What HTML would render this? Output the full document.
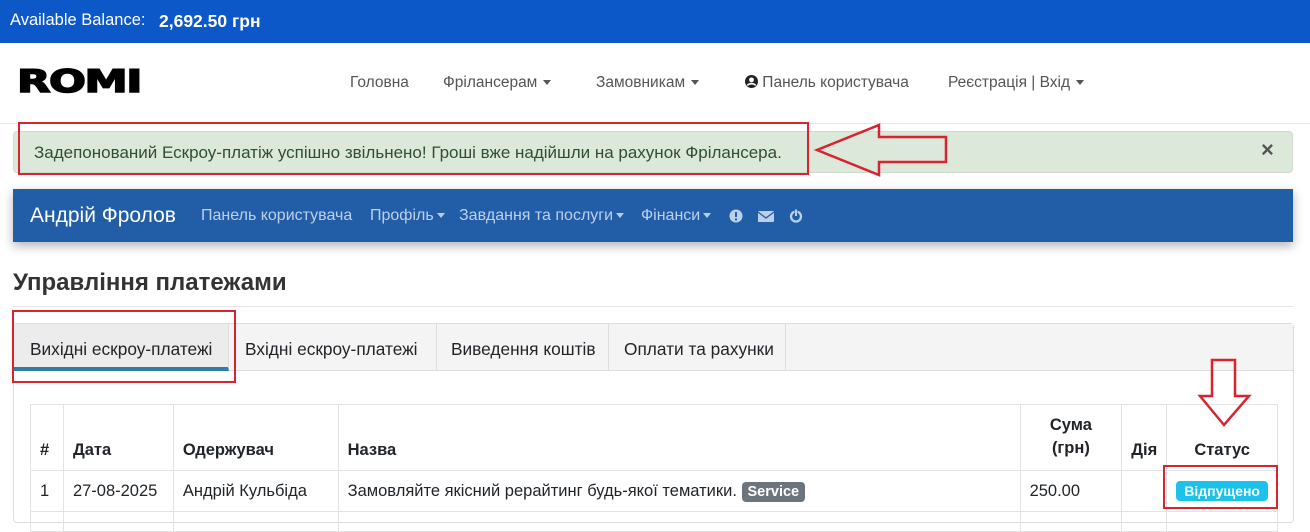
<!DOCTYPE html>
<html><head><meta charset="utf-8"><style>
*{box-sizing:border-box;margin:0;padding:0}
body{width:1310px;height:515px;overflow:hidden;background:#fff;font-family:"Liberation Sans",sans-serif;position:relative;color:#212529}
.abs{position:absolute;white-space:nowrap}
.top{position:absolute;left:0;top:0;width:1310px;height:43px;background:#0c58c9;color:#fff;font-size:16.5px}
.nav{font-size:15.5px;color:#555}
.caret{display:inline-block;width:0;height:0;border-left:4px solid transparent;border-right:4px solid transparent;border-top:5px solid #555;vertical-align:middle;margin-left:6px}
.wc{border-top-color:#b9cde8;margin-left:3px}
.red{position:absolute;border:2.5px solid #d9232f}
.bl{font-size:16px;color:#bcd0ea}
th,td{border:1px solid #e3e3e3;font-size:16.5px;text-align:left;padding:0 9px}
th{font-weight:bold;vertical-align:bottom;padding-bottom:10px}
</style></head><body>
<div class="top"><span class="abs" style="left:10px;top:11px">Available Balance:</span><span class="abs" style="left:159px;top:11px;font-weight:bold;font-size:17.5px">2,692.50 грн</span></div>
<div class="abs" style="left:17px;top:64px;font-family:'DejaVu Sans',sans-serif;font-weight:900;font-size:31px;letter-spacing:-1px;transform:scaleX(1.4);transform-origin:left;color:#000;-webkit-text-stroke:1.5px #000">ROMI</div>
<span class="abs nav" style="left:350px;top:74px">Головна</span>
<span class="abs nav" style="left:443px;top:74px">Фрілансерам<i class="caret"></i></span>
<span class="abs nav" style="left:596px;top:74px">Замовникам<i class="caret"></i></span>
<span class="abs nav" style="left:745px;top:74px"><svg width="13" height="13" viewBox="0 0 16 16" style="vertical-align:-1px"><circle cx="8" cy="8" r="8" fill="#222"/><circle cx="8" cy="6" r="3" fill="#fff"/><path d="M3 13c1.5-3 8.5-3 10 0" stroke="#fff" stroke-width="2" fill="none"/></svg> Панель користувача</span>
<span class="abs nav" style="left:948px;top:74px">Реєстрація | Вхід<i class="caret"></i></span>
<div class="abs" style="left:0;top:123px;width:1310px;height:1px;background:#e8e8e8"></div>
<div class="abs" style="left:13px;top:131px;width:1280px;height:42px;background:#dce8da;border:1px solid #cfdccc;border-radius:4px"></div>
<span class="abs" style="left:34px;top:143px;font-size:17px;color:#2f4f2f">Задепонований Ескроу-платіж успішно звільнено! Гроші вже надійшли на рахунок Фрілансера.</span>
<span class="abs" style="left:1261px;top:137px;font-size:22px;font-weight:bold;color:#555">×</span>
<div class="red" style="left:18px;top:122px;width:791px;height:53px"></div>
<svg class="abs" style="left:812px;top:122px" width="138" height="56"><path d="M5 28 L67 3 L67 15 L134 15 L134 40 L67 40 L67 53 Z" fill="none" stroke="#d9232f" stroke-width="2.5"/></svg>
<div class="abs" style="left:13px;top:189px;width:1280px;height:53px;background:#225ea8;box-shadow:0 4px 10px rgba(0,0,0,.3)"></div>
<span class="abs" style="left:30px;top:204px;font-size:21px;color:#fff">Андрій Фролов</span>
<span class="abs bl" style="left:201px;top:207px">Панель користувача</span>
<span class="abs bl" style="left:370px;top:207px">Профіль<i class="caret wc"></i></span>
<span class="abs bl" style="left:459px;top:207px">Завдання та послуги<i class="caret wc"></i></span>
<span class="abs bl" style="left:641px;top:207px">Фінанси<i class="caret wc"></i></span>
<svg class="abs" style="left:729px;top:209px" width="80" height="14"><circle cx="7" cy="7" r="6.5" fill="#bcd0ea"/><rect x="6" y="3" width="2" height="5" fill="#225ea8"/><rect x="6" y="9.5" width="2" height="2" fill="#225ea8"/><rect x="29" y="2" width="16" height="11" rx="1" fill="#bcd0ea"/><path d="M29 3 L37 9 L45 3" stroke="#225ea8" stroke-width="1.3" fill="none"/><circle cx="67" cy="7.5" r="5" stroke="#bcd0ea" stroke-width="2.3" fill="none"/><rect x="65.5" y="0" width="3" height="8" fill="#225ea8"/><rect x="66" y="0.5" width="2" height="6.5" fill="#bcd0ea"/></svg>
<span class="abs" style="left:13px;top:269px;font-size:24px;font-weight:bold;color:#333">Управління платежами</span>
<div class="abs" style="left:13px;top:306px;width:1280px;height:1px;background:#e5e5e5"></div>
<div class="abs" style="left:13px;top:323px;width:1281px;height:200px;border:1px solid #ddd;border-radius:4px"></div>
<div class="abs" style="left:14px;top:324px;width:1279px;height:47px;background:#f4f4f4;border-bottom:1px solid #ddd"></div>
<div class="abs" style="left:14px;top:324px;width:215px;height:47px;background:#ececec;border-right:1px solid #ddd;border-bottom:4px solid #2e7ea6"></div>
<div class="abs" style="left:436px;top:324px;width:1px;height:47px;background:#ddd"></div>
<div class="abs" style="left:608px;top:324px;width:1px;height:47px;background:#ddd"></div>
<div class="abs" style="left:785px;top:324px;width:1px;height:47px;background:#ddd"></div>
<span class="abs" style="left:30px;top:339px;font-size:17.3px">Вихідні ескроу-платежі</span>
<span class="abs" style="left:245px;top:339px;font-size:17.3px">Вхідні ескроу-платежі</span>
<span class="abs" style="left:451px;top:339px;font-size:17.3px">Виведення коштів</span>
<span class="abs" style="left:624px;top:339px;font-size:17.3px">Оплати та рахунки</span>
<div class="red" style="left:12px;top:310px;width:224px;height:73px"></div>
<table class="abs" style="left:30px;top:404px;width:1248px;border-collapse:collapse">
<tr style="height:66px"><th style="width:33px">#</th><th style="width:110px">Дата</th><th style="width:165px">Одержувач</th><th style="width:684px">Назва</th><th style="width:102px;text-align:center;line-height:23px">Сума<br>(грн)</th><th style="width:43px">Дія</th><th style="text-align:center">Статус</th></tr>
<tr style="height:41px"><td>1</td><td>27-08-2025</td><td>Андрій Кульбіда</td><td>Замовляйте якісний рерайтинг будь-якої тематики. <span style="background:#6c757d;color:#fff;font-weight:bold;font-size:14.5px;padding:2px 6px;border-radius:4px">Service</span></td><td>250.00</td><td></td><td style="text-align:center"><span style="background:#1bc2eb;color:#fff;font-weight:bold;font-size:14px;padding:2px 8px;border-radius:4px">Відпущено</span></td></tr>
<tr style="height:20px"><td></td><td></td><td></td><td></td><td></td><td></td><td></td></tr>
</table>
<div class="red" style="left:1163px;top:465px;width:115px;height:44px"></div>
<svg class="abs" style="left:1197px;top:358px" width="56" height="70"><path d="M15 2 L38 2 L38 38 L52 38 L27 67 L3 38 L15 38 Z" fill="none" stroke="#d9232f" stroke-width="2.5"/></svg>
</body></html>
